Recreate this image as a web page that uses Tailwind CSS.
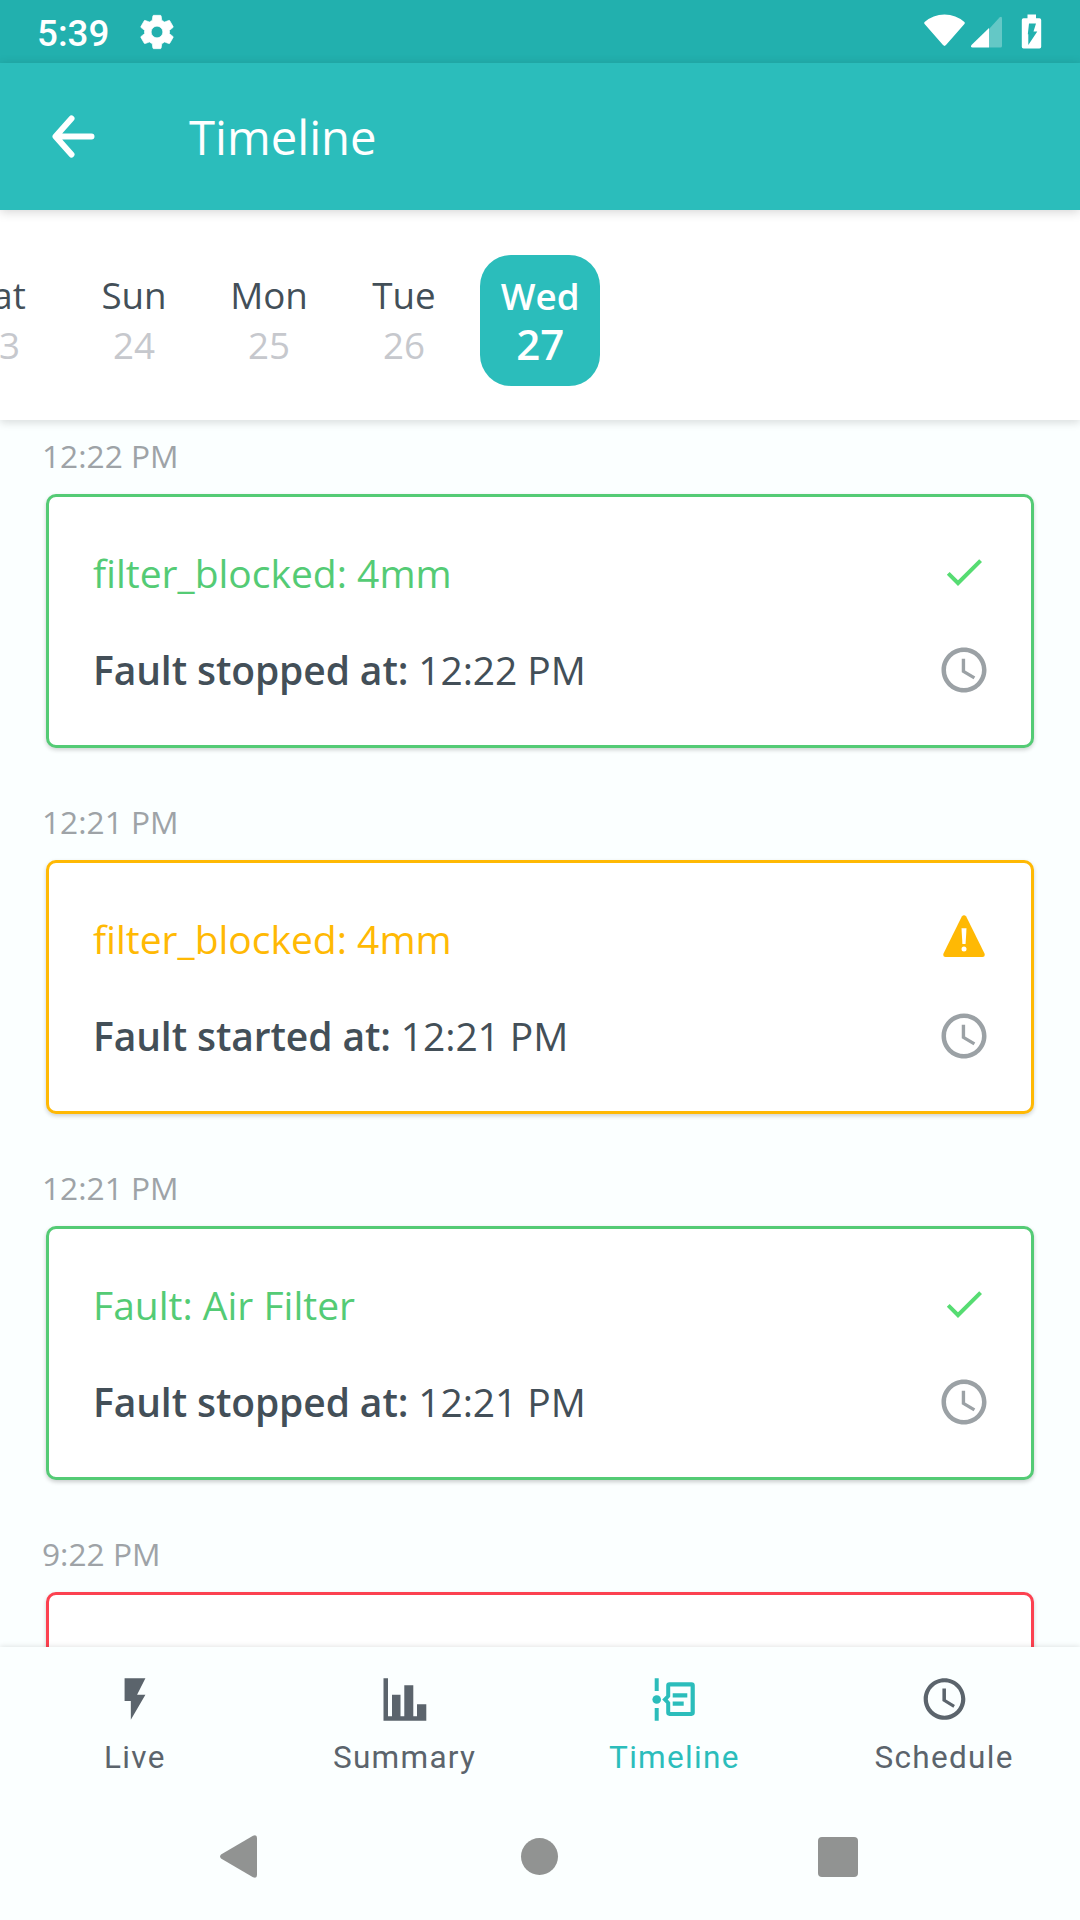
<!DOCTYPE html>
<html lang="en">
<head>
<meta charset="utf-8">
<title>Timeline</title>
<script src="https://cdn.jsdelivr.net/npm/@tailwindcss/browser@4"></script>
</head>
<body class="w-[1080px] h-[1920px] overflow-hidden flex flex-col bg-[#fbffff] font-['Open_Sans',sans-serif] text-[#434f58]">

<!-- Status bar -->
<div class="h-[63px] shrink-0 bg-[#22b0ae] flex items-center text-white pl-[37px] pr-[38px]">
  <span class="font-['Roboto',sans-serif] font-medium text-[36.75px] leading-[44px] pt-[4px]">5:39</span>
  <svg class="ml-[27.5px] w-[40px] h-[40px]" viewBox="0 0 24 24" fill="currentColor" stroke="currentColor" stroke-width=".4" stroke-linejoin="round"><path fill-rule="evenodd" d="M19.43 12.98c.04-.32.07-.64.07-.98s-.03-.66-.07-.98l2.11-1.65c.19-.15.24-.42.12-.64l-2-3.46c-.12-.22-.39-.3-.61-.22l-2.49 1c-.52-.4-1.08-.73-1.69-.98l-.38-2.65C14.46 2.18 14.25 2 14 2h-4c-.25 0-.46.18-.49.42l-.38 2.65c-.61.25-1.17.59-1.69.98l-2.49-1c-.23-.09-.49 0-.61.22l-2 3.46c-.13.22-.07.49.12.64l2.11 1.65c-.04.32-.07.65-.07.98s.03.66.07.98l-2.11 1.65c-.19.15-.24.42-.12.64l2 3.46c.12.22.39.3.61.22l2.49-1c.52.4 1.08.73 1.69.98l.38 2.65c.03.24.24.42.49.42h4c.25 0 .46-.18.49-.42l.38-2.65c.61-.25 1.17-.59 1.69-.98l2.49 1c.23.09.49 0 .61-.22l2-3.46c.12-.22.07-.49-.12-.64l-2.11-1.65zM12 15.5c-1.93 0-3.5-1.57-3.5-3.5s1.57-3.5 3.5-3.5 3.500 1.57 3.500 3.500-1.570 3.500-3.500 3.500z"/></svg>
  <svg class="ml-auto w-[118px] h-[36px]" viewBox="924 13.500 118 36" fill="currentColor">
    <path d="M924.6 21.6Q933 14 944.5 14T964.4 21.6Q965.2 22.3 964.4 23.4L946 44.6Q944.5 46.2 943 44.6L924.6 23.4Q923.8 22.3 924.6 21.6Z"/>
    <path opacity=".3" d="M989 28.5L999.5 17Q1002 15 1002 18V45.5Q1002 47 1000.500 47H989Z"/>
    <path d="M989 27.500V47H972.500Q970 46.600 971.500 44.500Z"/>
    <path fill-rule="evenodd" d="M1027.500 14h8.500v3.700h3.500q1.700 0 1.700 1.700V46.300q0 1.700-1.700 1.700h-16q-1.700 0-1.700-1.700V19.400q0-1.700 1.700-1.700h4zM1029 23h7l-2.500 8h3.800L1028.300 44.500V33.700H1027.800z"/>
  </svg>
</div>

<!-- App bar -->
<header class="relative z-20 h-[147px] shrink-0 bg-[#2bbdbb] flex items-center pl-[52px] text-white shadow-[0_2px_10px_rgba(0,0,0,0.17)]">
  <svg class="w-[43px] h-[43px]" viewBox="0 0 43 43" fill="none" stroke="currentColor" stroke-width="6" stroke-linecap="round" stroke-linejoin="round"><path d="M39.500 21.500H4M19.500 3.500L3.500 21.500L19.500 39.500"/></svg>
  <h1 class="ml-[94px] text-[47.25px] leading-[64px]">Timeline</h1>
</header>

<!-- Day picker -->
<div class="relative z-10 h-[210px] shrink-0 bg-white shadow-[0_3px_8px_rgba(0,0,0,0.13)]">
  <div class="flex pt-[45px] -ml-[68.5px] text-[36.75px] text-center">
    <div class="w-[135px] pt-[15px]"><div class="leading-[50px]">Sat</div><div class="leading-[50px] text-[#c6c8cd]">23</div></div>
    <div class="w-[135px] pt-[15px]"><div class="leading-[50px]">Sun</div><div class="leading-[50px] text-[#c6c8cd]">24</div></div>
    <div class="w-[135px] pt-[15px]"><div class="leading-[50px]">Mon</div><div class="leading-[50px] text-[#c6c8cd]">25</div></div>
    <div class="w-[135px] pt-[15px]"><div class="leading-[50px]">Tue</div><div class="leading-[50px] text-[#c6c8cd]">26</div></div>
    <div class="ml-[8px] w-[120.5px] h-[131px] rounded-[31px] bg-[#2bbdbb] text-white font-semibold pt-[16px] pl-px"><div class="leading-[50px]">Wed</div><div class="text-[42px] leading-[46px]">27</div></div>
  </div>
</div>

<!-- Events -->
<main class="flex-1 min-h-0 overflow-hidden">
  <section class="h-[366px] pt-[14px]">
    <div class="pl-[42px] text-[31.7px] leading-[44px] text-[#9ea3a7]">12:22 PM</div>
    <div class="mt-[16px] mx-[46px] h-[254px] rounded-[10px] border-[3px] border-[#54cb75] bg-white shadow-[0_2px_4px_rgba(0,0,0,0.18)] pt-[49px] pl-[44px] pr-[40px] flex flex-col gap-[43px] text-[39px] leading-[54px]">
      <div class="flex items-center justify-between"><span class="text-[#54cb75]">filter_blocked: 4mm</span><svg class="w-[48px] h-[48px] mr-[3px] mb-[3px]" viewBox="0 0 24 24" fill="#56dc72"><path d="M9 16.170L4.830 12l-1.420 1.410L9 19 21 7l-1.410-1.410z"/></svg></div>
      <div class="flex items-center justify-between"><span class="tracking-[-0.1px]"><b class="font-semibold">Fault stopped at:</b> 12:22 PM</span><svg class="w-[54px] h-[54px]" viewBox="0 0 24 24" fill="#9ba1a5"><path d="M11.990 2C6.470 2 2 6.480 2 12s4.470 10 9.990 10C17.520 22 22 17.520 22 12S17.520 2 11.990 2zM12 20c-4.420 0-8-3.580-8-8s3.580-8 8-8 8 3.580 8 8-3.580 8-8 8z"/><path d="M12.500 7H11v6l5.250 3.150.750-1.230-4.500-2.670z"/></svg></div>
    </div>
  </section>
  <section class="h-[366px] pt-[14px]">
    <div class="pl-[42px] text-[31.7px] leading-[44px] text-[#9ea3a7]">12:21 PM</div>
    <div class="mt-[16px] mx-[46px] h-[254px] rounded-[10px] border-[3px] border-[#ffb904] bg-white shadow-[0_2px_4px_rgba(0,0,0,0.18)] pt-[49px] pl-[44px] pr-[40px] flex flex-col gap-[43px] text-[39px] leading-[54px]">
      <div class="flex items-center justify-between"><span class="text-[#ffb904]">filter_blocked: 4mm</span><svg class="w-[42px] h-[42px] mr-[6px] mb-[6px]" viewBox="0 0 42 42"><path fill="#ffb904" d="M18.800 1.500Q21 -1.200 23.200 1.500L41.500 38.500Q42.500 41.600 39.500 42H2.500Q-.5 41.600 .5 38.500Z"/><path fill="#fff" d="M18.500 13.300h5l-.9 15.700h-3.200z"/><circle cx="21" cy="34" r="2.500" fill="#fff"/></svg></div>
      <div class="flex items-center justify-between"><span class="tracking-[-0.1px]"><b class="font-semibold">Fault started at:</b> 12:21 PM</span><svg class="w-[54px] h-[54px]" viewBox="0 0 24 24" fill="#9ba1a5"><path d="M11.990 2C6.470 2 2 6.480 2 12s4.470 10 9.990 10C17.520 22 22 17.520 22 12S17.520 2 11.990 2zM12 20c-4.420 0-8-3.580-8-8s3.580-8 8-8 8 3.580 8 8-3.580 8-8 8z"/><path d="M12.500 7H11v6l5.250 3.150.750-1.230-4.500-2.670z"/></svg></div>
    </div>
  </section>
  <section class="h-[366px] pt-[14px]">
    <div class="pl-[42px] text-[31.7px] leading-[44px] text-[#9ea3a7]">12:21 PM</div>
    <div class="mt-[16px] mx-[46px] h-[254px] rounded-[10px] border-[3px] border-[#54cb75] bg-white shadow-[0_2px_4px_rgba(0,0,0,0.2)] pt-[49px] pl-[44px] pr-[40px] flex flex-col gap-[43px] text-[39px] leading-[54px]">
      <div class="flex items-center justify-between"><span class="text-[#54cb75]">Fault: Air Filter</span><svg class="w-[48px] h-[48px] mr-[3px] mb-[3px]" viewBox="0 0 24 24" fill="#56dc72"><path d="M9 16.170L4.830 12l-1.420 1.410L9 19 21 7l-1.410-1.410z"/></svg></div>
      <div class="flex items-center justify-between"><span class="tracking-[-0.1px]"><b class="font-semibold">Fault stopped at:</b> 12:21 PM</span><svg class="w-[54px] h-[54px]" viewBox="0 0 24 24" fill="#9ba1a5"><path d="M11.990 2C6.470 2 2 6.480 2 12s4.470 10 9.990 10C17.520 22 22 17.520 22 12S17.520 2 11.990 2zM12 20c-4.420 0-8-3.580-8-8s3.580-8 8-8 8 3.580 8 8-3.580 8-8 8z"/><path d="M12.500 7H11v6l5.250 3.150.750-1.230-4.500-2.670z"/></svg></div>
    </div>
  </section>
  <section class="h-[366px] pt-[14px]">
    <div class="pl-[42px] text-[31.7px] leading-[44px] text-[#9ea3a7]">9:22 PM</div>
    <div class="mt-[16px] mx-[46px] h-[254px] rounded-[10px] border-[3px] border-[#fc4150] bg-white shadow-[0_2px_4px_rgba(0,0,0,0.18)]"></div>
  </section>
</main>

<!-- Tabs -->
<nav class="relative z-10 h-[147px] shrink-0 bg-[#fbffff] grid grid-cols-4 pt-[27px] pr-px text-[#5b646c] font-['Roboto',sans-serif] text-[31.5px] leading-[38px] tracking-[1.3px] shadow-[0_-1px_5px_rgba(0,0,0,0.1)]">
  <div class="flex flex-col items-center gap-[15px]">
    <svg class="w-[50px] h-[50px]" viewBox="0 0 24 24" fill="currentColor"><path d="M7 2v11h3v9l7-12h-4l4-8z"/></svg>
    <span>Live</span>
  </div>
  <div class="flex flex-col items-center gap-[15px]">
    <svg class="w-[50px] h-[50px]" viewBox="0 0 50 50" fill="currentColor"><path d="M3.500 4.200H8V42.200H12V20.700H20.500V42.200H24.300V11.300H33.300V42.200H37V30.200H46.300V46.700H3.500Z"/></svg>
    <span>Summary</span>
  </div>
  <div class="flex flex-col items-center gap-[15px] text-[#2bbdbb]">
    <svg class="w-[50px] h-[50px]" viewBox="650 1674 50 50" fill="currentColor"><path d="M655.700 1678.300h4v12.700h-4zM655.700 1708h4v12.700h-4z"/><circle cx="657.700" cy="1699.500" r="4.300"/><path fill-rule="evenodd" d="M670.500 1682.300h22q3.300 0 3.300 3.300v27q0 3.300-3.300 3.300h-22q-3.300 0-3.300-3.300v-9l-4-4.100 4-4.100v-9.800q0-3.300 3.300-3.300zM671.200 1686.500v10.200l-2.500 2.800 2.500 2.800v9.700h20.400v-25.500z"/><path d="M673.700 1693.300h14.600v4.200h-14.600zM673.700 1701.600h11v4.200h-11z"/></svg>
    <span>Timeline</span>
  </div>
  <div class="flex flex-col items-center gap-[15px]">
    <svg class="w-[51px] h-[50px]" viewBox="0 0 24 24" fill="currentColor"><path d="M11.990 2C6.470 2 2 6.480 2 12s4.470 10 9.990 10C17.520 22 22 17.520 22 12S17.520 2 11.990 2zM12 20c-4.420 0-8-3.580-8-8s3.580-8 8-8 8 3.580 8 8-3.580 8-8 8z"/><path d="M12.700 7H11v6l5.250 3.150.750-1.230-4.300-2.670z"/></svg>
    <span>Schedule</span>
  </div>
</nav>

<!-- System navigation -->
<div class="relative z-20 bg-[#fbffff] h-[126px] shrink-0 flex items-center justify-between pl-[220px] pr-[222px] pb-px text-[#919392]">
  <svg class="w-[37px] h-[43px]" viewBox="0 0 37 43" fill="currentColor"><path d="M1 19.500L33 .8Q37 -.8 37 3V40Q37 43.800 33 42.200L1 23.500Q-.8 21.500 1 19.500Z"/></svg>
  <div class="w-[37px] h-[37px] rounded-full bg-[#919392] ml-[3px]"></div>
  <div class="w-[40px] h-[40px] rounded-[4px] bg-[#919392]"></div>
</div>
</body>
</html>
